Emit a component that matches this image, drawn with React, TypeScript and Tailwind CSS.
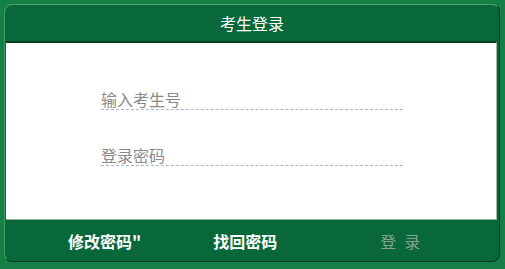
import React from "react";

export default function App() {
  const font = { fontFamily: '"Noto Sans CJK SC", "Noto Sans", sans-serif' };
  return (
    <div className="w-[505px] h-[269px] bg-[#157f46] pt-[4px] pl-[4px]" style={font}>
      <div className="w-[496px] h-[258px] bg-[#08683a] rounded-[8px] border-t border-l border-t-[#4fa277] border-l-[#3f9a6a] border-r border-b border-r-[#053a1e] border-b-[#053a1e] flex flex-col">
        <div className="h-[36px] flex items-center justify-center text-white text-[16px] leading-none">
          考生登录
        </div>
        <div className="ml-[1px] mr-[2px] h-[179px] bg-white border-t-2 border-t-[#0a3a20] border-r border-r-[#9fb6a8] border-b border-b-[#8fb09c] flex flex-col pt-[43px] pl-[95px] gap-[32px]">
          <div className="w-[302px] h-[24px] border-b border-dashed border-b-[#a3b6d4] flex items-end text-[16px] leading-none text-[#8a8a8a] pb-[2px]">
            输入考生号
          </div>
          <div className="w-[302px] h-[24px] border-b border-dashed border-b-[#a3b6d4] flex items-end text-[16px] leading-none text-[#8a8a8a] pb-[2px]">
            登录密码
          </div>
        </div>
        <div className="flex-1 flex items-center text-[16px] leading-none font-bold text-white">
          <span className="ml-[63px]">修改密码"</span>
          <span className="ml-[72px]">找回密码</span>
          <span className="ml-[103px] font-normal text-[#86a392] flex">
            <span>登</span>
            <span className="ml-[8px]">录</span>
          </span>
        </div>
      </div>
    </div>
  );
}
